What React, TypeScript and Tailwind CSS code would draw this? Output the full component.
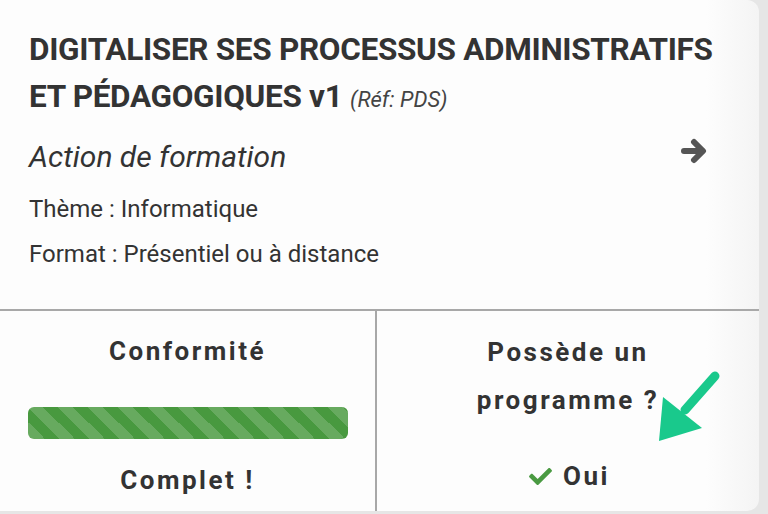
import React from 'react';
import { FaCheck } from 'react-icons/fa';

export default function App() {
  return (
    <div className="min-h-screen bg-[#e6e6e6] font-['Roboto',sans-serif] text-[#333]">
      <div className="w-[759px] h-[511px] rounded-r-[12px] bg-[linear-gradient(to_right,#fdfdfd_93%,#f4f4f4)] flex flex-col">
        <div className="h-[309px] px-[29px] pt-[26px]">
          <h2 className="text-[31.5px] leading-[47px] font-bold tracking-[-0.3px]">
            DIGITALISER SES PROCESSUS ADMINISTRATIFS
            <br />
            ET PÉDAGOGIQUES v1{' '}
            <span className="text-[22px] font-normal italic text-[#444] tracking-normal">(Réf: PDS)</span>
          </h2>
          <div className="mt-[12px] flex items-start justify-between pr-[22px]">
            <p className="text-[30px] italic leading-[44px]">Action de formation</p>
            <svg width="28" height="26" viewBox="0 0 28 26" className="mt-[3px] text-[#555]">
              <path d="M4 13 H22" stroke="currentColor" strokeWidth="6" strokeLinecap="round" />
              <path d="M14 4 L23 13 L14 22" fill="none" stroke="currentColor" strokeWidth="6" strokeLinecap="round" strokeLinejoin="round" />
            </svg>
          </div>
          <p className="mt-[8px] text-[24px] leading-[45px]">Thème : Informatique</p>
          <p className="text-[24px] leading-[45px]">Format : Présentiel ou à distance</p>
        </div>

        <div className="flex flex-1 border-t-2 border-[#a8a8a8]">
          <div className="w-[377px] border-r-2 border-[#a8a8a8] flex flex-col items-center pt-[20px]">
            <h3 className="text-[26px] font-bold tracking-[2.5px] leading-[40px]">Conformité</h3>
            <div className="mt-[36px] h-[32px] w-[320px] rounded-[6px] bg-[#48993f] bg-[linear-gradient(45deg,rgba(255,255,255,.17)_25%,transparent_25%,transparent_50%,rgba(255,255,255,.17)_50%,rgba(255,255,255,.17)_75%,transparent_75%,transparent)] bg-[length:30px_30px]" />
            <p className="mt-[21px] text-[26px] font-bold tracking-[2.5px] leading-[40px]">Complet !</p>
          </div>
          <div className="relative flex-1 flex flex-col items-center pt-[17px]">
            <h3 className="text-[26px] font-bold tracking-[2.5px] leading-[48px] text-center">
              Possède un
              <br />
              programme ?
            </h3>
            <p className="mt-[32px] flex items-center gap-[8px] text-[26px] font-bold tracking-[2.5px] leading-[40px]">
              <FaCheck className="h-[23px] w-[29px] text-[#4a9a42]" />
              Oui
            </p>
            <svg className="absolute left-[276px] top-[59px]" width="70" height="74" viewBox="0 0 70 74">
              <line x1="62" y1="6" x2="32" y2="40" stroke="#19c98c" strokeWidth="9" strokeLinecap="round" />
              <polygon points="10,27 49,58 6,71" fill="#19c98c" />
            </svg>
          </div>
        </div>
      </div>
    </div>
  );
}
